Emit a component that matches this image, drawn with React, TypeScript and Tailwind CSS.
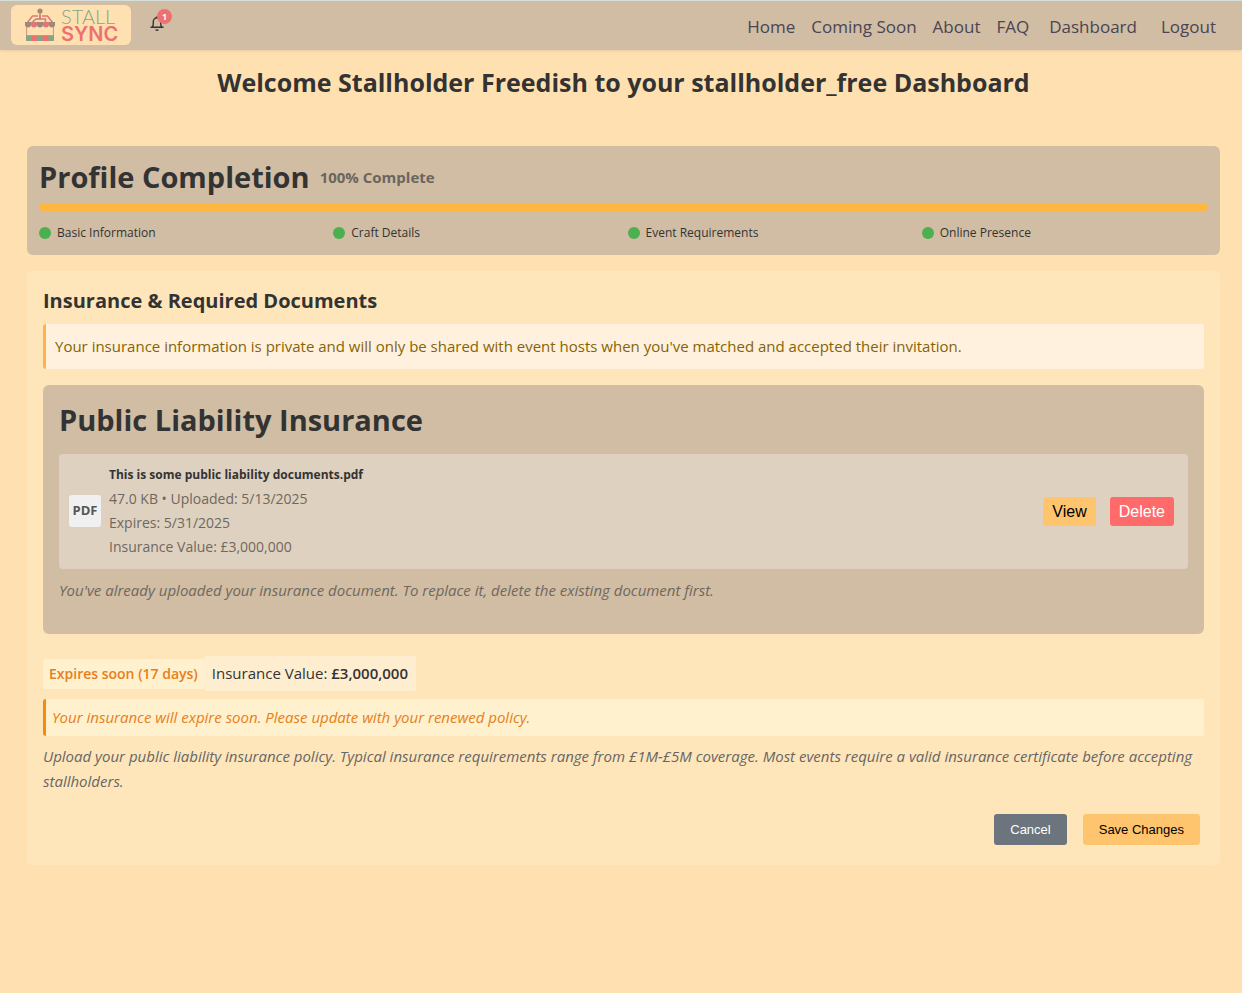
import React from "react";

const navLinks = [
  { label: "Home", gap: "mr-4" },
  { label: "Coming Soon", gap: "mr-4" },
  { label: "About", gap: "mr-4" },
  { label: "FAQ", gap: "mr-5" },
  { label: "Dashboard", gap: "mr-6" },
];

const steps = ["Basic Information", "Craft Details", "Event Requirements", "Online Presence"];

const scallops = [1, 7, 13, 19, 25];

function StallIcon() {
  return (
    <svg viewBox="0 0 32 34" className="h-[34px] w-8 shrink-0" fill="none" aria-hidden="true">
      <path d="M3.500 14.500 8.500 8H14M18 8h5.500l5 6.500" stroke="#dc7975" strokeWidth="1.500" />
      <path d="M8.500 14 12 11h4V4" stroke="#b58378" strokeWidth="1.500" />
      <path d="M16 7v4h5.500v3" stroke="#dc7975" strokeWidth="1.500" />
      <circle cx="16" cy="3" r="2.600" fill="#a98779" />
      {scallops.map((x, i) => (
        <path
          key={x}
          transform={`translate(${x} 14)`}
          d="M0 0h6v2.500a3 3 0 0 1-6 0z"
          fill={i % 2 ? "#dc7975" : "#a0877c"}
        />
      ))}
      <path d="M2.600 19v14M29.400 19v14" stroke="#dc8a80" strokeWidth="1" />
      <path d="M2 28h28v5H2z" fill="#80a78a" />
      <path d="M8 28h5v5H8zM18.500 28h6v5h-6z" fill="#ee716f" />
      <path d="M2 27.500h28" stroke="#c49680" strokeWidth="1" />
    </svg>
  );
}

function BellIcon() {
  return (
    <svg viewBox="0 0 16 16" className="size-4" fill="none" stroke="#333" strokeWidth="1.400" aria-hidden="true">
      <path d="M1.500 12.300h13M3.300 12c.8-1 1-2 1-3.500V6.500a3.700 3.700 0 0 1 7.400 0V8.500c0 1.500.2 2.500 1 3.500M8 1.300v1.500M6.800 14.500a1.300 1.300 0 0 0 2.400 0" />
    </svg>
  );
}

function Header() {
  return (
    <header className="flex items-center justify-between border-t border-[#d5dfdc] bg-[#d0bda3] pr-[26px] pl-[11px] pt-1 pb-[5px] shadow-[0_1px_3px_rgba(0,0,0,0.1)]">
      <div className="flex items-center">
        <a href="#" aria-label="Stall Sync" className="flex h-10 w-[120px] items-center gap-[5px] rounded-md bg-[#ffe1b1] pl-[13px]">
          <StallIcon />
          <span className="flex flex-col text-[20px] leading-[18px]">
            <span className="font-['Lato',sans-serif] font-light text-[#7fa78a]">STALL</span>
            <span className="font-['Inter',sans-serif] font-semibold text-[#ed716f]">SYNC</span>
          </span>
        </a>
        <button type="button" aria-label="Notifications" className="relative ml-[18px] -mt-1">
          <BellIcon />
          <span className="absolute -top-[6px] left-2 flex size-[15px] items-center justify-center rounded-full bg-[#ee716f] text-[9px] font-bold text-white">
            1
          </span>
        </button>
      </div>
      <nav className="flex items-center pt-[3px] text-[17px] leading-6 text-[#4a4453]">
        {navLinks.map((l) => (
          <a key={l.label} href="#" className={l.gap}>
            {l.label}
          </a>
        ))}
        <a href="#">Logout</a>
      </nav>
    </header>
  );
}

function ProfileCompletion() {
  return (
    <section className="rounded-md bg-[#d0bda3] p-3">
      <div className="flex items-center gap-[10px]">
        <h2 className="text-[29px] leading-[38px] font-bold">Profile Completion</h2>
        <span className="text-[15px] font-bold text-[#6b655d]">100% Complete</span>
      </div>
      <div className="mt-[7px] h-2 rounded-full bg-[#ffb83f]" />
      <ul className="mt-3 grid grid-cols-4 gap-2 text-[12px] leading-5">
        {steps.map((s) => (
          <li key={s} className="flex items-center gap-[6px]">
            <span className="size-3 rounded-full bg-[#4caf50]" />
            {s}
          </li>
        ))}
      </ul>
    </section>
  );
}

function InsuranceCard() {
  return (
    <section className="mt-4 rounded-md bg-[#d0bda3] px-4 pt-4 pb-8">
      <h3 className="text-[29px] leading-[38px] font-bold">Public Liability Insurance</h3>
      <div className="mt-[15px] flex items-center rounded bg-[#ded1bf] pt-[9px] pr-[14px] pb-[10px] pl-[10px]">
        <div className="flex size-8 items-center justify-center rounded-[3px] bg-[#f0f0f0] text-[13px] font-bold text-[#555]">
          PDF
        </div>
        <div className="ml-2 flex-1 text-[14px] leading-6 text-[#6f6860]">
          <p className="text-[12px] leading-6 font-bold text-[#333]">This is some public liability documents.pdf</p>
          <p>47.0 KB • Uploaded: 5/13/2025</p>
          <p>Expires: 5/31/2025</p>
          <p>Insurance Value: £3,000,000</p>
        </div>
        <div className="flex gap-[14px] font-['Liberation_Sans',Arial,sans-serif] text-[16px] leading-[19px]">
          <button type="button" className="rounded-[3px] bg-[#ffc56e] px-[9px] py-[5px] text-black">
            View
          </button>
          <button type="button" className="rounded-[3px] bg-[#ff6b6b] px-[9px] py-[5px] text-white">
            Delete
          </button>
        </div>
      </div>
      <p className="mt-[9px] text-[15px] leading-6 text-[#6f6860] italic">
        You've already uploaded your insurance document. To replace it, delete the existing document first.
      </p>
    </section>
  );
}

export default function App() {
  return (
    <div className="min-h-screen bg-[#ffe1b1] font-['Open_Sans','Noto_Sans',sans-serif] text-[#333]">
      <Header />
      <main className="pt-3 pr-[22px] pb-16 pl-[27px]">
        <h1 className="text-center text-[25px] leading-10 font-bold">
          Welcome Stallholder Freedish to your stallholder_free Dashboard
        </h1>
        <div className="mt-11">
          <ProfileCompletion />
        </div>
        <section className="mt-4 rounded-md bg-[#ffe6ba] px-4 pt-4 pb-5">
          <h2 className="text-[20px] leading-7 font-bold">Insurance &amp; Required Documents</h2>
          <p className="mt-[9px] rounded-[3px] border-l-3 border-[#ffb347] bg-[#fff1de] py-[10px] pl-[9px] text-[15px] leading-[25px] text-[#856404]">
            Your insurance information is private and will only be shared with event hosts when you've matched and
            accepted their invitation.
          </p>
          <InsuranceCard />
          <div className="mt-[22px] flex items-center">
            <span className="rounded-[3px] bg-[#fff1cd] px-[6px] py-[3px] text-[14px] leading-6 font-semibold text-[#e67e22]">
              Expires soon (17 days)
            </span>
            <span className="rounded-[3px] bg-[#ffedd0] px-2 py-[5px] text-[15px] leading-[25px]">
              Insurance Value: <strong className="font-semibold">£3,000,000</strong>
            </span>
          </div>
          <p className="mt-2 rounded-[3px] border-l-3 border-[#f58a0b] bg-[#fff1cd] py-[6px] pl-[6px] text-[15px] leading-[25px] text-[#e67e22] italic">
            Your insurance will expire soon. Please update with your renewed policy.
          </p>
          <p className="mt-2 text-[15px] leading-[25px] text-[#666] italic">
            Upload your public liability insurance policy. Typical insurance requirements range from £1M-£5M coverage.
            Most events require a valid insurance certificate before accepting stallholders.
          </p>
          <div className="mt-5 flex justify-end gap-4 pr-1 font-['Liberation_Sans',Arial,sans-serif] text-[13px] leading-[15px]">
            <button type="button" className="rounded-[3px] bg-[#6c757d] px-4 py-2 text-white">
              Cancel
            </button>
            <button type="button" className="rounded-[3px] bg-[#ffc56e] px-4 py-2 text-black">
              Save Changes
            </button>
          </div>
        </section>
      </main>
    </div>
  );
}
